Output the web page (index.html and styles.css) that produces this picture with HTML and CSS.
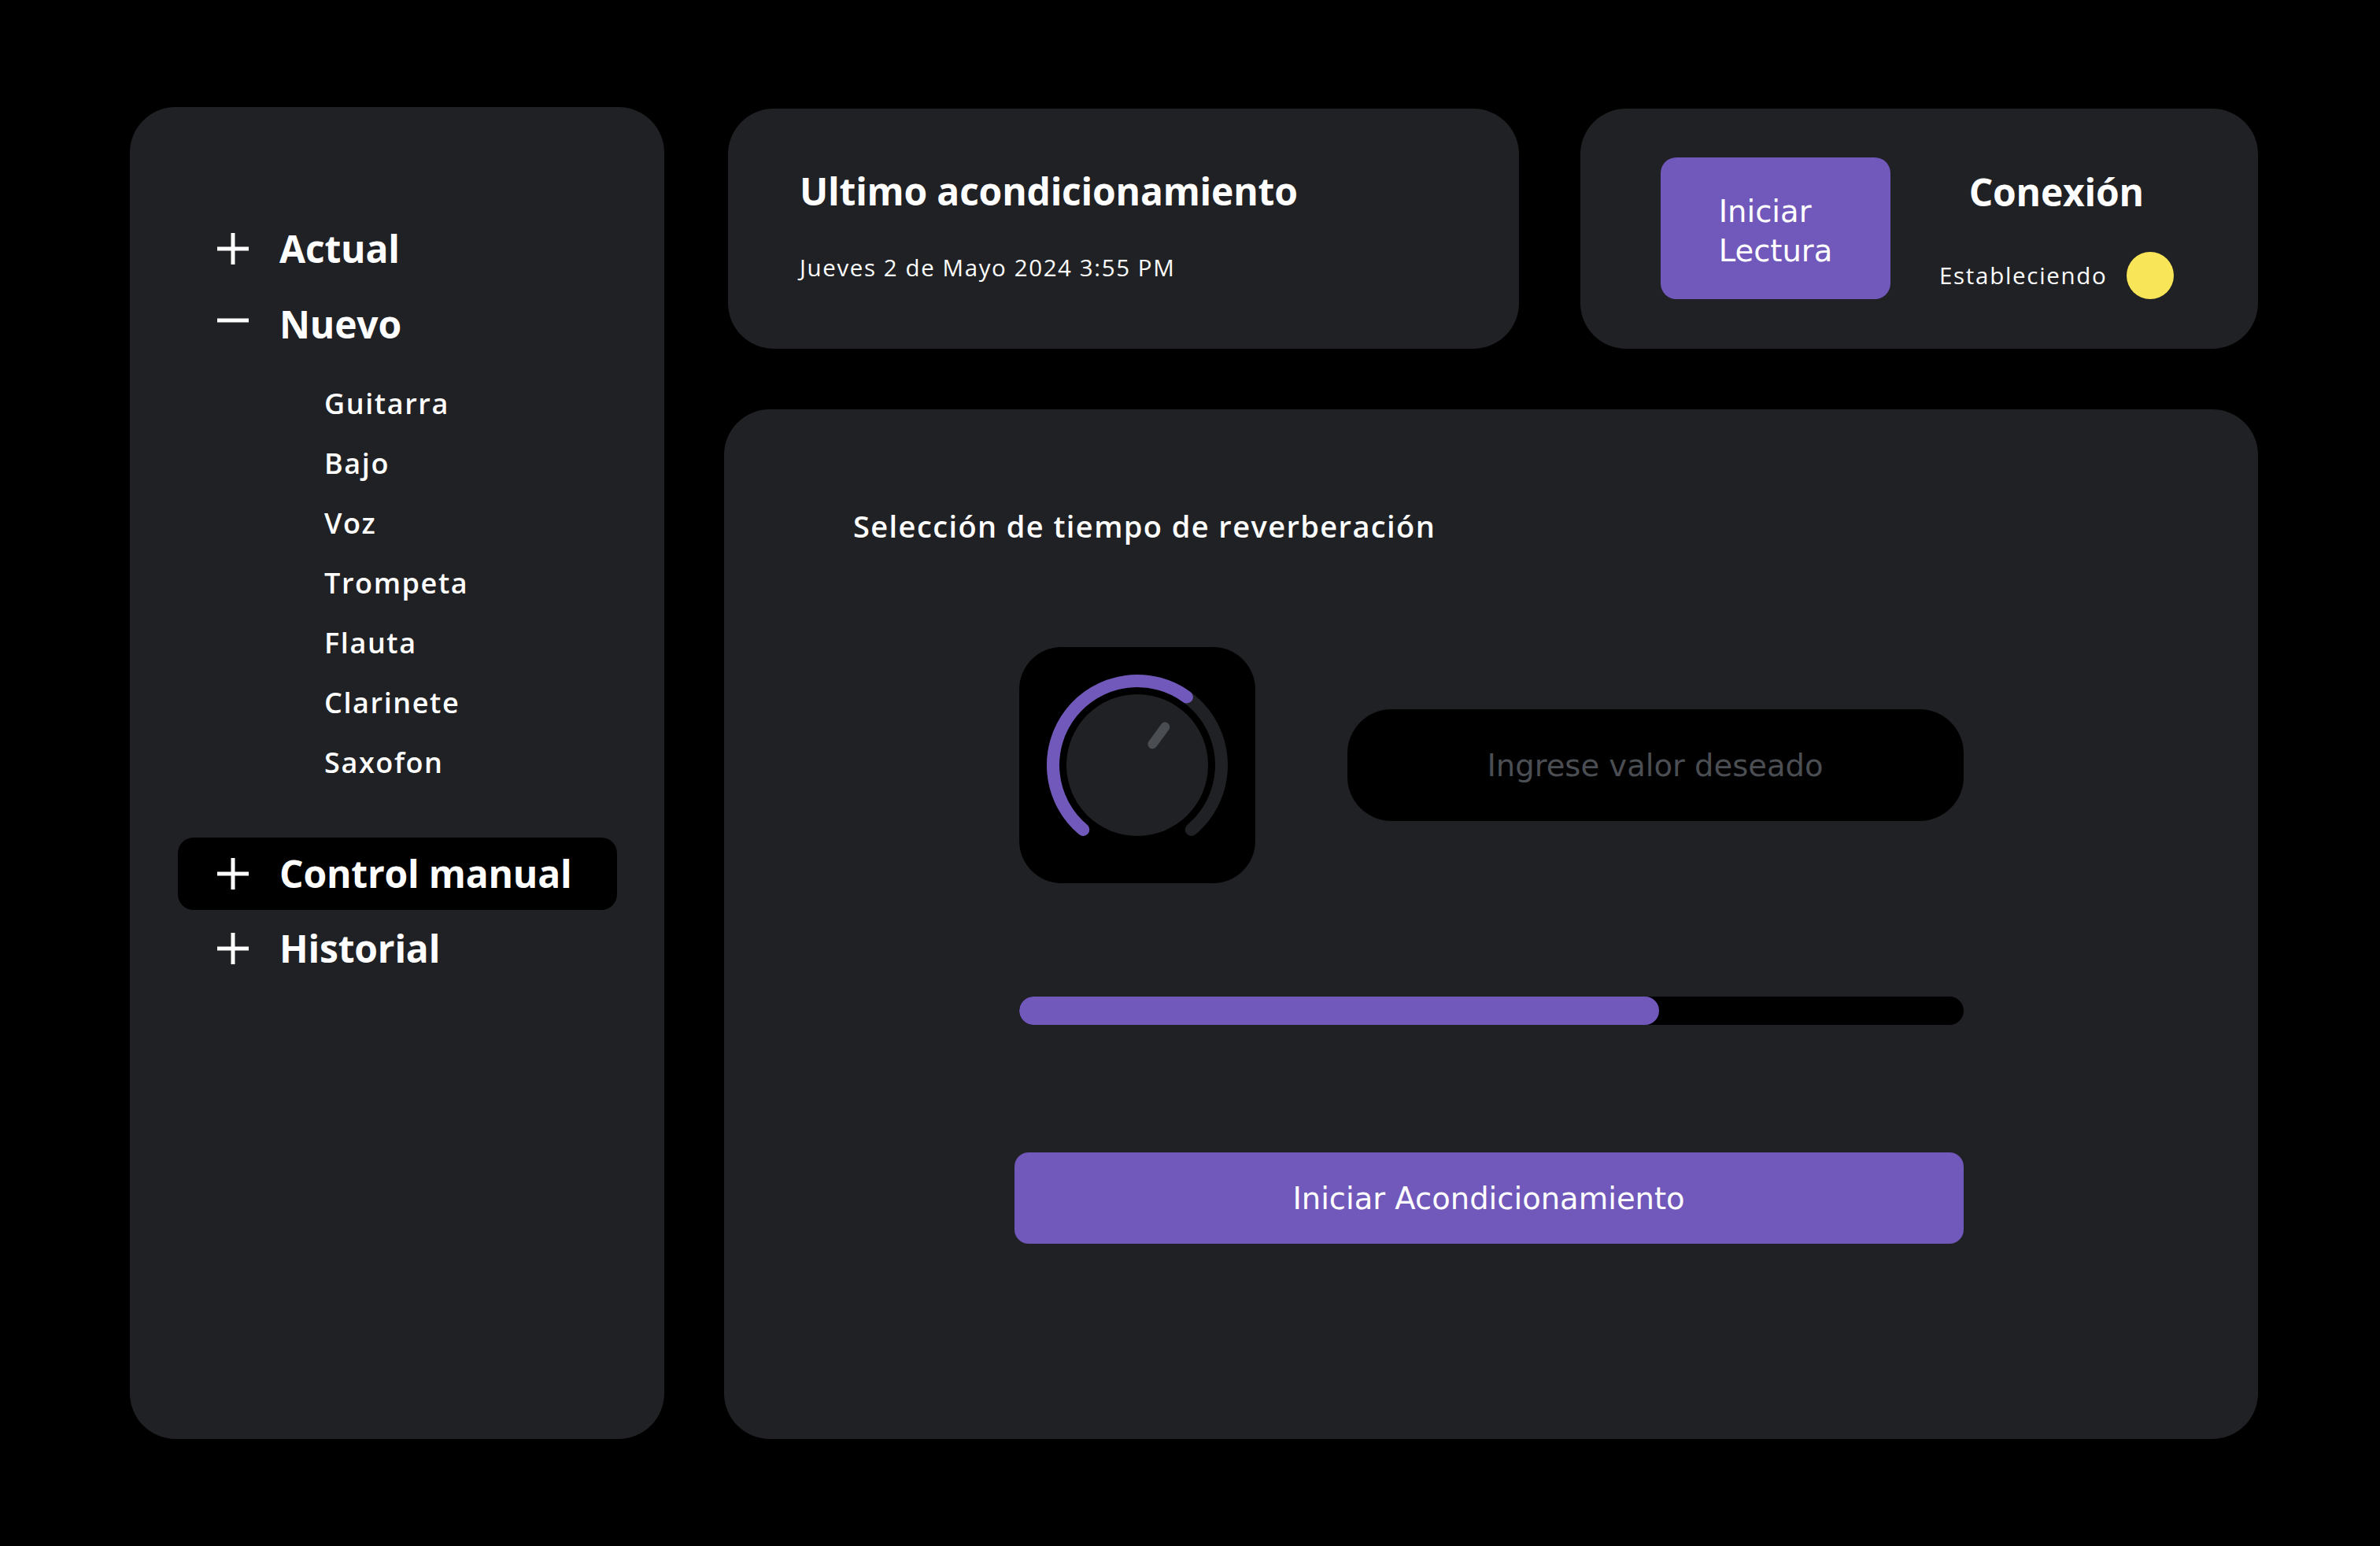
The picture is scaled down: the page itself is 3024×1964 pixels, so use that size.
FILE: index.html
```html
<!DOCTYPE html>
<html lang="es">
<head>
<meta charset="utf-8">
<title>Acondicionamiento</title>
<link rel="stylesheet" href="styles.css">
</head>
<body>
<div class="app">
  <aside class="sidebar">
    <nav class="menu">
      <div class="menu-item">
        <svg class="menu-icon" viewBox="0 0 44 44" width="44" height="44"><path d="M22 2V42M2 22H42" stroke="#fff" stroke-width="5" fill="none"/></svg>
        <span>Actual</span>
      </div>
      <div class="menu-item">
        <svg class="menu-icon" viewBox="0 0 44 44" width="44" height="44"><path d="M2 17H42" stroke="#fff" stroke-width="5" fill="none"/></svg>
        <span>Nuevo</span>
      </div>
      <ul class="submenu">
        <li>Guitarra</li>
        <li>Bajo</li>
        <li>Voz</li>
        <li>Trompeta</li>
        <li>Flauta</li>
        <li>Clarinete</li>
        <li>Saxofon</li>
      </ul>
      <div class="menu-item menu-item--compact menu-item--active">
        <svg class="menu-icon" viewBox="0 0 44 44" width="44" height="44"><path d="M22 2V42M2 22H42" stroke="#fff" stroke-width="5" fill="none"/></svg>
        <span>Control manual</span>
      </div>
      <div class="menu-item menu-item--compact menu-item--last">
        <svg class="menu-icon" viewBox="0 0 44 44" width="44" height="44"><path d="M22 2V42M2 22H42" stroke="#fff" stroke-width="5" fill="none"/></svg>
        <span>Historial</span>
      </div>
    </nav>
  </aside>

  <main class="content">
    <div class="top-row">
      <section class="card card--last">
        <h2 class="heading">Ultimo acondicionamiento</h2>
        <p class="date">Jueves 2 de Mayo 2024 3:55 PM</p>
      </section>
      <section class="card card--conn">
        <button class="read-btn"><span class="read-btn__text">Iniciar<br>Lectura</span></button>
        <div class="conn">
          <h2 class="heading">Conexión</h2>
          <div class="conn__status">
            <span class="conn__label">Estableciendo</span>
            <span class="conn__dot"></span>
          </div>
        </div>
      </section>
    </div>

    <section class="card card--main">
      <h3 class="section-title">Selección de tiempo de reverberación</h3>
      <div class="panel">
        <div class="knob-row">
          <div class="knob">
            <svg viewBox="0 0 300 300" width="300" height="300">
              <path d="M81.22 231.96A107 107 0 1 1 218.78 231.96" fill="none" stroke="#202124" stroke-width="16" stroke-linecap="round"/>
              <path d="M81.22 231.96A107 107 0 0 1 212.89 63.43" fill="none" stroke="#7158bb" stroke-width="16" stroke-linecap="round"/>
              <circle cx="150" cy="150" r="90" fill="#202124"/>
              <line x1="169.4" y1="123.3" x2="185.3" y2="101.5" stroke="#4a4d52" stroke-width="12" stroke-linecap="round"/>
            </svg>
          </div>
          <div class="value-input"><span class="value-input__placeholder">Ingrese valor deseado</span></div>
        </div>
        <div class="progress"><div class="progress__fill" style="width: 67.8%"></div></div>
        <button class="start-btn">Iniciar Acondicionamiento</button>
      </div>
    </section>
  </main>
</div>
</body>
</html>
```

FILE: styles.css
```css
html, body {
  margin: 0;
  padding: 0;
  background: #000;
}

body {
  width: 3024px;
  height: 1964px;
  overflow: hidden;
  font-family: "Open Sans", "Noto Sans", sans-serif;
  color: #fff;
}

.app {
  display: grid;
  grid-template-columns: 679px 1949px;
  column-gap: 76px;
  padding: 136px 0 0 165px;
}

/* Sidebar */
.sidebar {
  height: 1692px;
  box-sizing: border-box;
  background: #202124;
  border-radius: 58px;
  padding: 132px 60px 0 61px;
}

.menu-item {
  display: flex;
  align-items: center;
  gap: 37px;
  padding-left: 48px;
  height: 96px;
  font-size: 48px;
  font-weight: 700;
  letter-spacing: -0.2px;
  line-height: 96px;
  border-radius: 20px;
}

.menu-item--compact {
  height: 92px;
  line-height: 92px;
}

.menu-item--active {
  background: #000;
  margin-top: 57px;
}

.menu-item--last {
  margin-top: 3px;
}

.menu-icon {
  flex: none;
  display: block;
}

.submenu {
  list-style: none;
  margin: 0;
  padding: 15px 0 0 186px;
}

.submenu li {
  font-size: 36px;
  font-weight: 600;
  letter-spacing: 1.6px;
  line-height: 76px;
  height: 76px;
}

/* Right area */
.content {
  margin-top: 2px;
  display: flex;
  flex-direction: column;
  gap: 77px;
}

.top-row {
  display: grid;
  grid-template-columns: 1005px 861px;
  column-gap: 78px;
  padding-left: 5px;
  height: 305px;
}

.card {
  background: #202124;
  border-radius: 58px;
  box-sizing: border-box;
}

.heading {
  margin: 0;
  font-size: 48px;
  font-weight: 700;
  letter-spacing: -0.2px;
  line-height: 58px;
}

.card--last {
  padding: 76px 0 0 91px;
}

.date {
  margin: 50px 0 0;
  font-size: 29.5px;
  font-weight: 500;
  letter-spacing: 1.6px;
  line-height: 36px;
}

.card--conn {
  display: flex;
  align-items: flex-start;
  gap: 62px;
  padding: 62px 0 0 102px;
}

.read-btn {
  width: 292px;
  height: 180px;
  box-sizing: border-box;
  padding: 7px 0 0;
  border: 0;
  border-radius: 20px;
  background: #7158bb;
  color: #fff;
  display: flex;
  align-items: center;
  justify-content: center;
  font-family: "DejaVu Sans", sans-serif;
  font-size: 38.5px;
  line-height: 50px;
  text-align: left;
}

.read-btn__text {
  display: block;
}

.conn {
  display: flex;
  flex-direction: column;
  align-items: center;
  padding-top: 15px;
}

.conn__status {
  display: flex;
  align-items: center;
  gap: 24px;
  margin-top: 47px;
}

.conn__label {
  font-size: 29.5px;
  font-weight: 500;
  letter-spacing: 1.7px;
  line-height: 36px;
}

.conn__dot {
  width: 60px;
  height: 60px;
  border-radius: 50%;
  background: #f8e658;
}

/* Main card */
.card--main {
  height: 1308px;
  display: flex;
  flex-direction: column;
  padding-top: 125px;
}

.section-title {
  margin: 0 0 0 164px;
  font-size: 38px;
  font-weight: 600;
  letter-spacing: 1.4px;
  line-height: 46px;
}

.panel {
  width: 1200px;
  align-self: center;
  margin-top: 131px;
  display: flex;
  flex-direction: column;
}

.knob-row {
  display: flex;
  align-items: center;
  gap: 117px;
  height: 300px;
}

.knob {
  width: 300px;
  height: 300px;
  flex: none;
  background: #000;
  border-radius: 54px;
}

.knob svg {
  display: block;
}

.value-input {
  width: 784px;
  height: 142px;
  background: #000;
  border-radius: 56px;
  display: flex;
  align-items: center;
  justify-content: center;
}

.value-input__placeholder {
  font-family: "DejaVu Sans", sans-serif;
  font-size: 38.5px;
  color: #4b4e53;
}

.progress {
  margin-top: 144px;
  height: 36px;
  background: #000;
  border-radius: 18px;
  overflow: hidden;
}

.progress__fill {
  height: 100%;
  background: #7158bb;
  border-radius: 18px;
}

.start-btn {
  margin: 162px 0 0 -6px;
  width: 1206px;
  height: 116px;
  border: 0;
  border-radius: 18px;
  background: #7158bb;
  color: #fff;
  font-family: "DejaVu Sans", sans-serif;
  font-size: 38.5px;
  display: flex;
  align-items: center;
  justify-content: center;
}
```
